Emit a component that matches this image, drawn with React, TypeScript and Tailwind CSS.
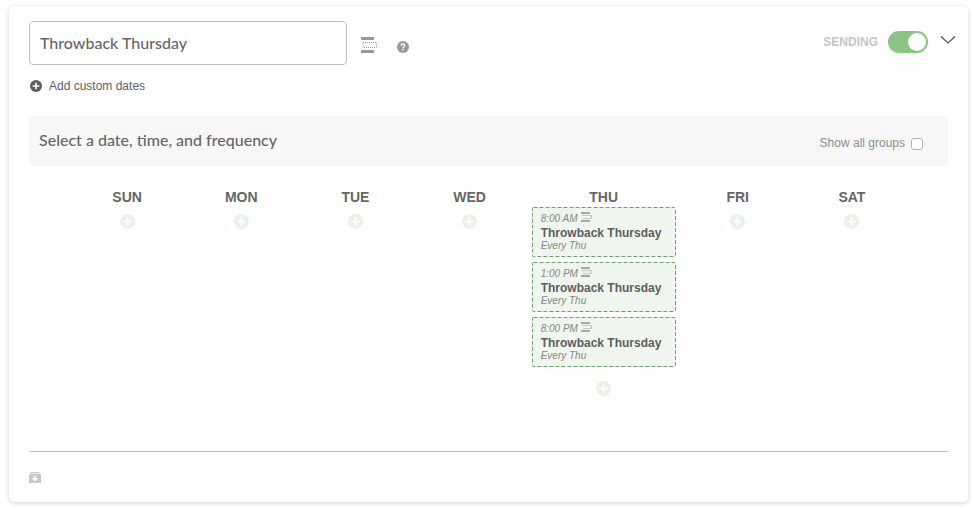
import { useState } from "react";

type Slot = { time: string; title: string; repeat: string };

const days: { name: string; slots: Slot[] }[] = [
  { name: "SUN", slots: [] },
  { name: "MON", slots: [] },
  { name: "TUE", slots: [] },
  { name: "WED", slots: [] },
  {
    name: "THU",
    slots: [
      { time: "8:00 AM", title: "Throwback Thursday", repeat: "Every Thu" },
      { time: "1:00 PM", title: "Throwback Thursday", repeat: "Every Thu" },
      { time: "8:00 PM", title: "Throwback Thursday", repeat: "Every Thu" },
    ],
  },
  { name: "FRI", slots: [] },
  { name: "SAT", slots: [] },
];

function PlusCircle({ className }: { className: string }) {
  return (
    <svg viewBox="0 0 15 15" className={className} aria-hidden="true">
      <circle cx="7.5" cy="7.5" r="7.5" fill="currentColor" />
      <path d="M7.5 3.3v8.4M3.3 7.5h8.4" stroke="#fff" strokeWidth="2" />
    </svg>
  );
}

function QueueIcon({ className }: { className: string }) {
  return (
    <svg viewBox="0 0 16 16" className={className} aria-hidden="true">
      <path d="M0 0h13v3H0zM0 13h13v3H0z" fill="currentColor" />
      <rect x="2" y="5.5" width="13.5" height="5" fill="none" stroke="currentColor" strokeDasharray="1 1" />
    </svg>
  );
}

function SmallQueueIcon() {
  return (
    <svg viewBox="0 0 11 10" className="h-[10px] w-[11px] text-[#a3a8a3]" aria-hidden="true">
      <path d="M0 0h9v2H0zM0 8h9v2H0z" fill="currentColor" />
      <path d="M1 3.5h9.5v3H2" fill="none" stroke="currentColor" strokeOpacity="0.6" />
    </svg>
  );
}

function SlotCard({ slot }: { slot: Slot }) {
  return (
    <button
      type="button"
      className="relative flex h-[50px] w-36 flex-col items-start justify-start bg-[#eff6ee] pt-[5px] pl-[9px] text-left"
    >
      <svg className="absolute inset-0 h-full w-full" aria-hidden="true">
        <rect
          x="0.5"
          y="0.5"
          width="143"
          height="49"
          rx="1"
          fill="none"
          stroke="#6ba76b"
          strokeDasharray="4 2"
        />
      </svg>
      <span className="flex items-start gap-[3px] text-[10px] leading-[14px] text-[#858885] italic">
        {slot.time}
        <SmallQueueIcon />
      </span>
      <span className="text-xs leading-[14px] font-bold whitespace-nowrap text-[#5e5e5e]">{slot.title}</span>
      <span className="text-[10px] leading-3 text-[#858885] italic">{slot.repeat}</span>
    </button>
  );
}

export default function App() {
  const [name, setName] = useState("Throwback Thursday");
  const [sending, setSending] = useState(true);
  const [showAll, setShowAll] = useState(false);

  return (
    <main className="bg-white pt-[6px] pr-[6px] pb-[7px] pl-[9px] font-['Liberation_Sans',Arial,sans-serif] text-[#666]">
      <section className="rounded-[5px] bg-white px-5 pt-[15px] pb-[19px] shadow-[0_1px_5px_0_rgba(0,0,0,0.18)]">
        <header className="flex items-start">
          <input
            aria-label="Group name"
            value={name}
            onChange={(e) => setName(e.target.value)}
            className="h-11 w-[318px] rounded border border-[#c2c2c2] bg-white px-[10px] pb-[2px] font-['Lato',sans-serif] text-base font-medium text-[#666] outline-none"
          />
          <button type="button" aria-label="Queue position" className="mt-4 ml-[14px]">
            <QueueIcon className="h-4 w-4 text-[#999]" />
          </button>
          <button type="button" aria-label="Help" className="mt-5 ml-5">
            <svg viewBox="0 0 12 12" className="h-3 w-3" aria-hidden="true">
              <circle cx="6" cy="6" r="6" fill="#999" />
              <path
                d="M4.2 4.7C4.2 3.5 5 3 6 3s1.8.6 1.8 1.5C7.8 5.6 6 5.7 6 7.2"
                fill="none"
                stroke="#fff"
                strokeWidth="1.4"
              />
              <path d="M5.3 8h1.4v1.4H5.3z" fill="#fff" />
            </svg>
          </button>
          <div className="mt-[10px] -mr-2 ml-auto flex items-center">
            <label htmlFor="sending" className="mr-[10px] text-xs font-bold text-[#c2c6c6]">
              SENDING
            </label>
            <span className="relative mr-3 flex h-[22px] w-10">
              <input
                id="sending"
                type="checkbox"
                role="switch"
                checked={sending}
                onChange={() => setSending(!sending)}
                className="peer h-[22px] w-10 appearance-none rounded-full bg-[#c6c6c6] checked:bg-[#8ac586]"
              />
              <span className="pointer-events-none absolute top-[2px] left-[2px] h-[18px] w-[18px] rounded-full bg-white peer-checked:left-5" />
            </span>
            <button type="button" aria-label="Collapse">
              <svg viewBox="0 0 16 22" className="h-[22px] w-4" aria-hidden="true">
                <path d="M1 5.5l7 6.5 7-6.5" fill="none" stroke="#555" strokeWidth="1.2" />
              </svg>
            </button>
          </div>
        </header>

        <button type="button" className="mt-3 flex items-center gap-[7px] pl-px text-xs leading-[18px] text-[#5e5e5e]">
          <PlusCircle className="h-3 w-3" />
          Add custom dates
        </button>

        <div className="mt-[21px] flex h-[50px] items-center justify-between rounded-[5px] bg-[#f7f7f7] pr-[25px] pl-[10px]">
          <h2 className="pb-[2px] font-['Lato',sans-serif] text-base leading-6 font-medium">
            Select a date, time, and frequency
          </h2>
          <label className="mt-1 flex items-center gap-[6px] text-xs leading-[18px] text-[#8e8e8e]">
            Show all groups
            <input
              type="checkbox"
              checked={showAll}
              onChange={() => setShowAll(!showAll)}
              className="mt-[2px] h-3 w-3 appearance-none rounded-[3px] border border-[#adb0ad] bg-white checked:bg-[#8ac586]"
            />
          </label>
        </div>

        <div className="mt-[22px] grid min-h-[263px] grid-cols-[1fr_1fr_1fr_1fr_154px_1fr_1fr] pr-[39px] pl-[41px]">
          {days.map((day) => (
            <div key={day.name} className="flex flex-col items-center">
              <h3 className="mb-px text-sm leading-[18px] font-bold">{day.name}</h3>
              {day.slots.length > 0 && (
                <div className="mb-[7px] flex flex-col gap-[5px]">
                  {day.slots.map((slot) => (
                    <SlotCard key={slot.time} slot={slot} />
                  ))}
                </div>
              )}
              <button type="button" aria-label={"Add time on " + day.name} className="mt-[7px]">
                <PlusCircle className="h-[15px] w-[15px] text-[#e6f3e5]" />
              </button>
            </div>
          ))}
        </div>

        <footer className="border-t border-[#c2c4c4] pt-5">
          <button type="button" aria-label="Archive" className="block">
            <svg viewBox="0 0 12 11" className="h-[11px] w-3" aria-hidden="true">
              <path d="M2 0h8l1 1H1z" fill="#c6c8c8" />
              <path d="M1 1h10v1H1z" fill="#e6e8e8" />
              <path d="M0 2h12v9H0z" fill="#c6c8c8" />
              <path d="M5 4h2v2h2.5L6 9.4 2.5 6H5z" fill="#fff" />
            </svg>
          </button>
        </footer>
      </section>
    </main>
  );
}
